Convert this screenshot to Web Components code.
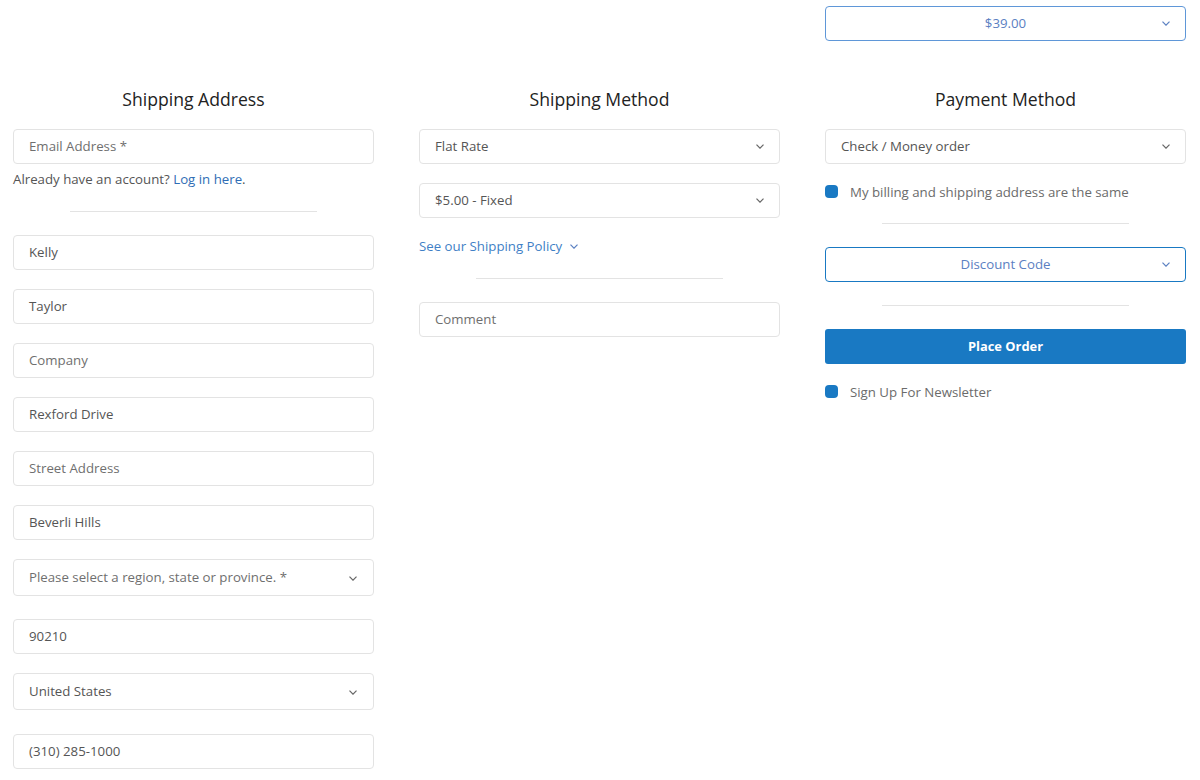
<!DOCTYPE html>
<html>
<head>
<meta charset="utf-8">
<title>Checkout</title>
<style>
    body { margin: 0; background: #fff; color: #555; font: 13.25px/20px "Open Sans", sans-serif; }
</style>
</head>
<body>
<checkout-page>
    <select-box slot="top" tone="accent" align="center" style="--line:#5f97d8">$39.00</select-box>

    <checkout-column title="Shipping Address">
        <text-field style="margin-top:0" placeholder>Email Address *</text-field>
        <plain-note style="margin-top:5px">Already have an account? <a>Log in here</a>.</plain-note>
        <form-rule style="margin-top:22px"></form-rule>
        <text-field style="margin-top:23px">Kelly</text-field>
        <text-field style="margin-top:19px">Taylor</text-field>
        <text-field style="margin-top:19px" placeholder>Company</text-field>
        <text-field style="margin-top:19px">Rexford Drive</text-field>
        <text-field style="margin-top:19px" placeholder>Street Address</text-field>
        <text-field style="margin-top:19px">Beverli Hills</text-field>
        <select-box style="margin-top:19px" tall placeholder>Please select a region, state or province. *</select-box>
        <text-field style="margin-top:23px">90210</text-field>
        <select-box style="margin-top:19px" tall>United States</select-box>
        <text-field style="margin-top:24px">(310) 285-1000</text-field>
    </checkout-column>

    <checkout-column title="Shipping Method">
        <select-box>Flat Rate</select-box>
        <select-box style="margin-top:19px">$5.00 - Fixed</select-box>
        <policy-link style="margin-top:18px">See our Shipping Policy</policy-link>
        <form-rule style="margin-top:22px"></form-rule>
        <text-field style="margin-top:23px" placeholder>Comment</text-field>
    </checkout-column>

    <checkout-column title="Payment Method">
        <select-box>Check / Money order</select-box>
        <check-row style="margin-top:18px">My billing and shipping address are the same</check-row>
        <form-rule style="margin-top:21px"></form-rule>
        <select-box style="margin-top:23px" tone="accent" align="center">Discount Code</select-box>
        <form-rule style="margin-top:23px"></form-rule>
        <order-button style="margin-top:23px">Place Order</order-button>
        <check-row style="margin-top:18px">Sign Up For Newsletter</check-row>
    </checkout-column>
</checkout-page>

<script>
const CHEVRON = `<svg width="8" height="5" viewBox="0 0 8 5" fill="none" stroke="currentColor" stroke-width="1.2"><path d="M.5.7L4 4.2 7.5.7"/></svg>`;

class CheckoutPage extends HTMLElement {
    constructor() {
        super();
        this.attachShadow({ mode: 'open' });
        this.shadowRoot.innerHTML = `
            <style>
                :host { display: block; padding: 6px 14px 0 13px; }
                .grid { display: grid; grid-template-columns: repeat(3, 361px); column-gap: 45px; }
                .top { margin-bottom: 46px; }
                .top ::slotted(*) { grid-column: 3; }
            </style>
            <div class="grid top"><slot name="top"></slot></div>
            <div class="grid"><slot></slot></div>
        `;
    }
}
customElements.define('checkout-page', CheckoutPage);

class CheckoutColumn extends HTMLElement {
    constructor() {
        super();
        this.attachShadow({ mode: 'open' });
        this.shadowRoot.innerHTML = `
            <style>
                :host { display: flex; flex-direction: column; min-width: 0; }
                h2 {
                    margin: 0 0 18px;
                    font: 500 17.6px/24px "Open Sans", sans-serif;
                    color: #222;
                    text-align: center;
                }
            </style>
            <h2></h2>
            <slot></slot>
        `;
    }
    connectedCallback() {
        this.shadowRoot.querySelector('h2').textContent = this.getAttribute('title');
        this.removeAttribute('title');
    }
}
customElements.define('checkout-column', CheckoutColumn);

class TextField extends HTMLElement {
    constructor() {
        super();
        this.attachShadow({ mode: 'open' });
        this.shadowRoot.innerHTML = `
            <style>
                :host {
                    display: flex;
                    align-items: center;
                    box-sizing: border-box;
                    height: 35px;
                    padding: 0 15px 2px;
                    border: 1px solid #e3e3e3;
                    border-radius: 4px;
                    background: #fff;
                    color: #555;
                }
                :host([placeholder]) { color: #6f6f6f; }
            </style>
            <slot></slot>
        `;
    }
}
customElements.define('text-field', TextField);

class SelectBox extends HTMLElement {
    constructor() {
        super();
        this.attachShadow({ mode: 'open' });
        this.shadowRoot.innerHTML = `
            <style>
                :host {
                    display: flex;
                    align-items: center;
                    position: relative;
                    box-sizing: border-box;
                    height: 35px;
                    padding: 0 15px 2px;
                    border: 1px solid var(--line, #e3e3e3);
                    border-radius: 4px;
                    background: #fff;
                    color: #555;
                }
                :host([tall]) { height: 37px; }
                :host([placeholder]) { color: #6f6f6f; }
                :host([tone="accent"]) { --line: #1979c3; color: #5b80c2; }
                :host([align="center"]) { justify-content: center; }
                .chevron { position: absolute; right: 15px; top: 50%; margin-top: -3px; line-height: 0; color: #666; }
                :host([tall]) .chevron { right: 16px; margin-top: -2px; }
                :host([tone="accent"]) .chevron { color: #5b80c2; }
            </style>
            <slot></slot>
            <span class="chevron">${CHEVRON}</span>
        `;
    }
}
customElements.define('select-box', SelectBox);

class FormRule extends HTMLElement {
    constructor() {
        super();
        this.attachShadow({ mode: 'open' });
        this.shadowRoot.innerHTML = `
            <style>
                :host { display: block; width: 247px; height: 1px; align-self: center; background: #e3e3e3; }
            </style>
        `;
    }
}
customElements.define('form-rule', FormRule);

class PlainNote extends HTMLElement {
    constructor() {
        super();
        this.attachShadow({ mode: 'open' });
        this.shadowRoot.innerHTML = `
            <style>
                :host { display: block; line-height: 20px; color: #555; }
                ::slotted(a) { color: #2f6db5; }
            </style>
            <slot></slot>
        `;
    }
}
customElements.define('plain-note', PlainNote);

class PolicyLink extends HTMLElement {
    constructor() {
        super();
        this.attachShadow({ mode: 'open' });
        this.shadowRoot.innerHTML = `
            <style>
                :host { display: flex; align-items: center; gap: 8px; line-height: 20px; color: #3f7fc6; }
                svg { margin-top: 1px; color: #5b80c2; }
            </style>
            <slot></slot>
            ${CHEVRON}
        `;
    }
}
customElements.define('policy-link', PolicyLink);

class CheckRow extends HTMLElement {
    constructor() {
        super();
        this.attachShadow({ mode: 'open' });
        this.shadowRoot.innerHTML = `
            <style>
                :host { display: flex; align-items: center; gap: 12px; line-height: 20px; color: #6b6b6b; }
                .box { width: 13px; height: 13px; border-radius: 4px; background: #1979c3; margin-top: -2px; }
            </style>
            <span class="box"></span>
            <span><slot></slot></span>
        `;
    }
}
customElements.define('check-row', CheckRow);

class OrderButton extends HTMLElement {
    constructor() {
        super();
        this.attachShadow({ mode: 'open' });
        this.shadowRoot.innerHTML = `
            <style>
                :host {
                    display: flex;
                    align-items: center;
                    justify-content: center;
                    height: 35px;
                    padding-bottom: 2px;
                    box-sizing: border-box;
                    border-radius: 3px;
                    background: #1979c3;
                    color: #fff;
                    font-weight: 700;
                    font-size: 12.9px;
                }
            </style>
            <slot></slot>
        `;
    }
}
customElements.define('order-button', OrderButton);
</script>
</body>
</html>
